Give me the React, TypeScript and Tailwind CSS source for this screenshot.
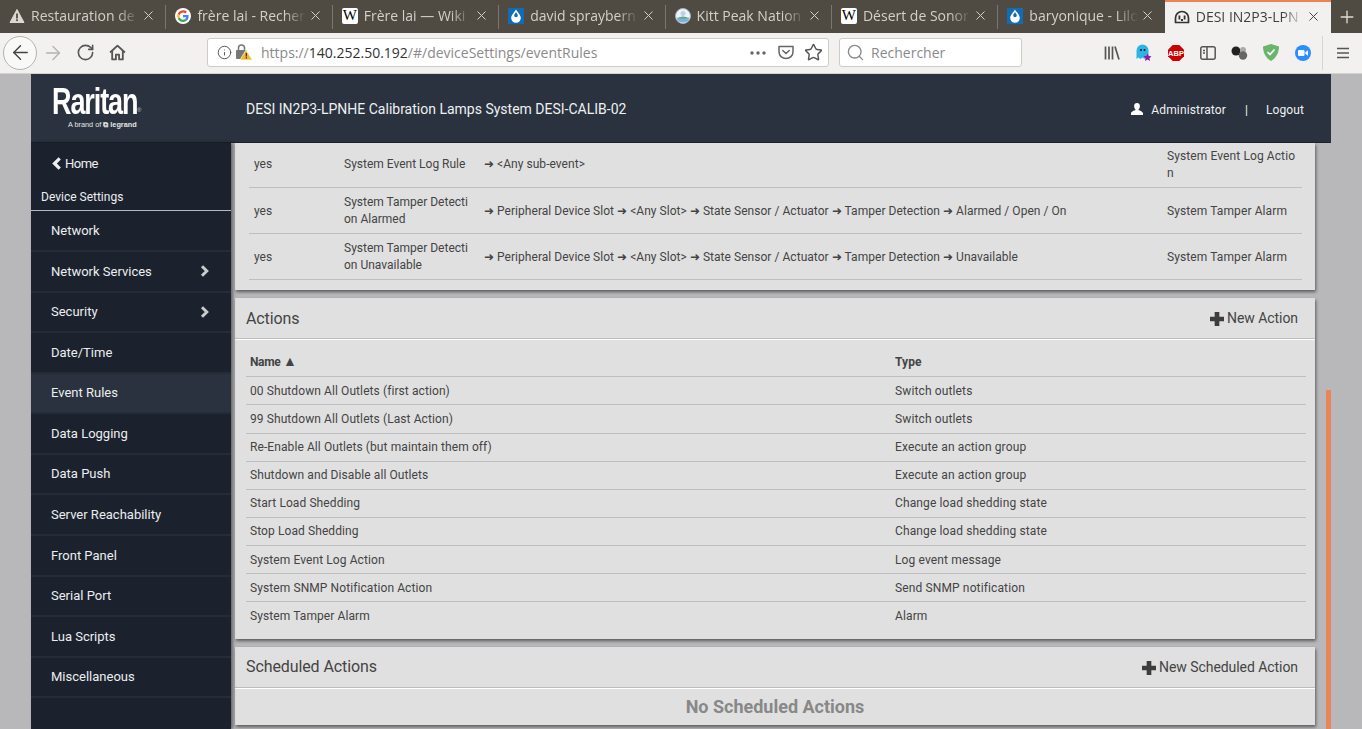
import React from "react";
import { ArrowLeft, ArrowRight, RotateCw, Info, X, Plus, Search, Star } from "lucide-react";

const Wiki = () => (
  <span className="w-4 h-4 bg-white rounded-[2px] flex items-center justify-center text-black text-[15px] leading-none font-['Liberation_Serif',serif]">W</span>
);
const Drop = () => (
  <svg width="16" height="16" viewBox="0 0 16 16"><rect width="16" height="16" fill="#0f6cb5" /><path d="M8 1.500 C9 3.500 12.800 7 12.800 10 A4.800 4.800 0 0 1 3.200 10 C3.200 7 7 3.500 8 1.500Z" fill="#fff" /><path d="M8 4.200 C8.800 5.400 9.800 6.400 9.800 7.500 A1.800 1.800 0 0 1 6.200 7.500 C6.200 6.400 7.200 5.400 8 4.200Z" fill="#0f6cb5" /></svg>
);
const tabs: { t: string; i: React.ReactNode; sep: boolean; active?: boolean }[] = [
  { t: "Restauration de", sep: true, i: <svg width="16" height="16" viewBox="0 0 16 16"><path d="M8 1.500 15 14.500H1Z" fill="#dcd9d2" stroke="#dcd9d2" strokeLinejoin="round" /><rect x="7.100" y="5.500" width="1.800" height="5" fill="#4f4b43" /><rect x="7.100" y="11.300" width="1.800" height="1.800" fill="#4f4b43" /></svg> },
  { t: "frère lai - Recher", sep: true, i: <svg width="16" height="16" viewBox="0 0 16 16"><circle cx="8" cy="8" r="8" fill="#fff" /><path d="M13.600 8.200c0-.5 0-.9-.1-1.300H8v2.400h3.200c-.1.8-.6 1.400-1.200 1.800l1.900 1.500c1.100-1 1.700-2.500 1.700-4.400Z" fill="#4285f4" /><path d="M8 14c1.600 0 2.900-.5 3.900-1.400L10 11.100c-.5.400-1.200.6-2 .6-1.500 0-2.800-1-3.300-2.400l-1.900 1.500C3.700 12.700 5.700 14 8 14Z" fill="#34a853" /><path d="M4.700 9.300a3.700 3.700 0 0 1 0-2.400L2.800 5.400a6 6 0 0 0 0 5.400Z" fill="#fbbc05" /><path d="M8 4.500c.9 0 1.600.3 2.200.9l1.700-1.700A6 6 0 0 0 2.800 5.400l1.900 1.500C5.200 5.500 6.500 4.500 8 4.500Z" fill="#ea4335" /></svg> },
  { t: "Frère lai — Wiki", sep: true, i: <Wiki /> },
  { t: "david spraybern", sep: true, i: <Drop /> },
  { t: "Kitt Peak Nation", sep: true, i: <svg width="16" height="16" viewBox="0 0 16 16"><circle cx="8" cy="8" r="7.500" fill="#eef3f6" stroke="#9fb4c6" /><path d="M1.500 10 Q8 7 14.500 10 L13 13 Q8 16 3 13Z" fill="#7fb2d8" /><path d="M4 9.500 Q8 8 12 9.500 L12 10.500 L4 10.500Z" fill="#5fa86a" /><circle cx="8" cy="5.500" r="2.500" fill="#b9d2e6" /></svg> },
  { t: "Désert de Sonor", sep: true, i: <Wiki /> },
  { t: "baryonique - Lilo", sep: false, i: <Drop /> },
  { t: "DESI IN2P3-LPN", sep: false, active: true, i: <svg width="16" height="16" viewBox="0 0 16 16"><path d="M3 13.500 H1.500 V9 A6.500 6.500 0 0 1 14.500 9 V13.500 H3Z" fill="none" stroke="#333" strokeWidth="1.700" strokeLinejoin="round" /><rect x="4.500" y="6.500" width="1.800" height="4" fill="#333" /><rect x="9.700" y="6.500" width="1.800" height="4" fill="#333" /><rect x="7" y="10" width="2" height="2" fill="#333" /></svg> },
];

const rules = [
  { a: "yes", b: "System Event Log Rule", c: "➜ <Any sub-event>", d: "System Event Log Action", h: "h-[45px]", s: "pb-[2px]", e: "" },
  { a: "yes", b: "System Tamper Detection Alarmed", c: "➜ Peripheral Device Slot ➜ <Any Slot> ➜ State Sensor / Actuator ➜ Tamper Detection ➜ Alarmed / Open / On", d: "System Tamper Alarm", h: "h-[46px]", s: "pt-[2px]", e: "pt-[2px]" },
  { a: "yes", b: "System Tamper Detection Unavailable", c: "➜ Peripheral Device Slot ➜ <Any Slot> ➜ State Sensor / Actuator ➜ Tamper Detection ➜ Unavailable", d: "System Tamper Alarm", h: "h-[46px]", s: "pt-[2px]", e: "pt-[2px]" },
];
const actions = [
  ["00 Shutdown All Outlets (first action)", "Switch outlets"],
  ["99 Shutdown All Outlets (Last Action)", "Switch outlets"],
  ["Re-Enable All Outlets (but maintain them off)", "Execute an action group"],
  ["Shutdown and Disable all Outlets", "Execute an action group"],
  ["Start Load Shedding", "Change load shedding state"],
  ["Stop Load Shedding", "Change load shedding state"],
  ["System Event Log Action", "Log event message"],
  ["System SNMP Notification Action", "Send SNMP notification"],
  ["System Tamper Alarm", "Alarm"],
];
const nav = ["Network", "Network Services", "Security", "Date/Time", "Event Rules", "Data Logging", "Data Push", "Server Reachability", "Front Panel", "Serial Port", "Lua Scripts", "Miscellaneous"];

const Cross = () => (
  <svg width="14" height="14" viewBox="1 1 12 12" fill="#3d3d3d"><path d="M5 1h4v4h4v4H9v4H5V9H1V5h4Z" /></svg>
);

function PanelHead({ title, action, tc = "" }: { title: string; action: string; tc?: string }) {
  return (
    <div className="h-[42px] flex items-center justify-between pl-[11px] pr-[17px] border-b border-b-white shadow-[inset_0_-1px_0_#bcbcbc]">
      <span className={`text-[16px] text-[#444] tracking-[-0.1px] ${tc}`}>{title}</span>
      <span className="flex items-center gap-[3px] text-[14px] text-[#444] tracking-[-0.06px]"><Cross />{action}</span>
    </div>
  );
}

export default function App() {
  return (
    <div className="w-[1362px] h-[729px] overflow-hidden flex flex-col font-['Roboto',sans-serif]">
      <div className="h-[33px] shrink-0 bg-[#4f4b43] flex font-['Open_Sans',sans-serif] text-[14px]">
        {tabs.map((t, i) => (
          <div key={i} className={`w-[166.4px] h-[33px] shrink-0 flex items-center pl-[9px] pr-[10px] pb-[2px] ${t.active ? "bg-[#f2f1ef] text-[#3f3f3f] border-t-2 border-t-[#ea8157]" : "text-[#d3d0c9]"} ${t.sep ? "relative after:absolute after:right-0 after:top-[5px] after:h-[24px] after:w-px after:bg-[#7b776e]" : ""}`}>
            <span className="w-4 h-4 shrink-0 flex">{t.i}</span>
            <span className="ml-[6px] flex-1 whitespace-nowrap overflow-hidden [mask-image:linear-gradient(to_right,black_80%,transparent_100%)]">{t.t}</span>
            <X size={15} strokeWidth={1.6} className={`shrink-0 ml-[2px] ${t.active ? "text-[#444]" : "text-[#d3d0c9]"}`} />
          </div>
        ))}
        <div className="flex-1 flex items-center justify-center"><Plus size={20} strokeWidth={1.6} className="text-[#e0ddd6]" /></div>
      </div>

      <div className="h-[40px] shrink-0 bg-[#f2f1ef] flex items-center pb-[1px] font-['Open_Sans',sans-serif] text-[14px] text-[#5a5a5a]">
        <div className="ml-[3px] w-[34px] h-[34px] shrink-0 rounded-full border border-[#b5b3b0] bg-[#f9f9f8] flex items-center justify-center"><ArrowLeft size={23} strokeWidth={1.5} className="text-[#444]" /></div>
        <ArrowRight size={22} strokeWidth={1.5} className="ml-[5px] text-[#b4b3b1]" />
        <RotateCw size={19} strokeWidth={2} className="ml-[12px] text-[#555]" />
        <svg width="17" height="17" viewBox="0 0 16 16" className="ml-[14px]" fill="none" stroke="#555" strokeWidth="1.700" strokeLinejoin="round"><path d="M1 8 8 1.500 15 8" /><path d="M3 6.500V14.500H6.500V10H9.500V14.500H13V6.500" /></svg>
        <div className="ml-[81px] w-[622px] h-[29px] bg-white border border-[#cfccc8] rounded-[3px] flex items-center pl-[9px] pr-[5px]">
          <Info size={15} strokeWidth={1.6} className="text-[#5a5a5a]" />
          <svg width="18" height="17" viewBox="0 0 18 17" className="ml-[3px]"><rect x="1" y="6" width="11" height="9" rx="1" fill="#777" /><path d="M3.500 6V4a3 3 0 0 1 6 0v2" fill="none" stroke="#777" strokeWidth="1.500" /><path d="M11 6 17.500 16H5Z" fill="#f5b820" stroke="#fff" strokeWidth=".7" /><rect x="10.700" y="9" width="1.300" height="3.500" fill="#333" /><rect x="10.700" y="13.200" width="1.300" height="1.300" fill="#333" /></svg>
          <span className="ml-[8px] text-[#8a8a8a]">https://<span className="text-[#333]">140.252.50.192</span>/#/deviceSettings/eventRules</span>
          <span className="flex-1" />
          <svg width="16" height="4" viewBox="0 0 16 4" fill="#666"><circle cx="2" cy="2" r="1.700" /><circle cx="8" cy="2" r="1.700" /><circle cx="14" cy="2" r="1.700" /></svg>
          <svg width="16" height="15" viewBox="0 0 16 15" className="ml-[12px]" fill="none" stroke="#666" strokeWidth="1.500"><path d="M1 1.500H15V7A7 6.500 0 0 1 1 7Z" strokeLinejoin="round" /><path d="M4.800 5.500 8 8.500 11.200 5.500" strokeLinecap="round" /></svg>
          <Star size={19} strokeWidth={1.8} className="ml-[10px] text-[#555]" />
        </div>
        <div className="ml-[10px] w-[183px] h-[29px] bg-white border border-[#cfccc8] rounded-[3px] flex items-center pl-[6px] text-[#8a8a8a]">
          <Search size={19} strokeWidth={1.7} className="text-[#888]" />
          <span className="ml-[6px]">Rechercher</span>
        </div>
        <div className="ml-[82px] flex items-center">
          <svg width="16" height="16" viewBox="0 0 16 16" stroke="#555" strokeWidth="1.700"><path d="M1.500 1.500V14.500M5 1.500V14.500M8.500 1.500V14.500M11 1.500 15 14.500" /></svg>
          <svg width="16" height="18" viewBox="0 0 16 18" className="ml-[16px]"><path d="M.5 15V6.500a6 6 0 0 1 12 0V15l-2-1.500-2 1.500-2-1.500-2 1.500-2-1.500Z" fill="#2fb3e6" /><circle cx="5" cy="6" r="1" fill="#111" /><circle cx="8.500" cy="6" r="1" fill="#111" /><path d="M11.500 9.500l1.200 2.500 2.800.3-2 1.900.5 2.800-2.500-1.400-2.500 1.400.5-2.800-2-1.900 2.800-.3Z" fill="#8e1aa5" /></svg>
          <svg width="16" height="16" viewBox="0 0 16 16" className="ml-[16px]"><path d="M4.700 0H11.300L16 4.700V11.300L11.300 16H4.700L0 11.300V4.700Z" fill="#c00" /><text x="8" y="10.800" textAnchor="middle" fontSize="7.500" fontWeight="700" fill="#fff" fontFamily="Liberation Sans, sans-serif">ABP</text></svg>
          <svg width="16" height="14" viewBox="0 0 16 14" className="ml-[16px]" fill="none" stroke="#555" strokeWidth="1.500"><rect x=".8" y=".8" width="14.400" height="12.400" rx="2" /><path d="M7 1V13M3 4.500H5M3 7H5" /></svg>
          <svg width="17" height="15" viewBox="0 0 17 15" className="ml-[15px]"><circle cx="5" cy="6" r="4.500" fill="#222" /><circle cx="12" cy="5" r="3" fill="#aaa" /><circle cx="12" cy="10.500" r="4.200" fill="#666" /></svg>
          <svg width="16" height="17" viewBox="0 0 16 17" className="ml-[15px]"><path d="M8 0 16 2.500C16 9 13 14 8 17 3 14 0 9 0 2.500Z" fill="#68b56b" /><path d="M4.500 8 7 10.500 11.500 5.500" fill="none" stroke="#fff" strokeWidth="1.600" /></svg>
          <svg width="16" height="16" viewBox="0 0 16 16" className="ml-[16px]"><circle cx="8" cy="8" r="8" fill="#2d8cff" /><rect x="3" y="5" width="6.500" height="6" rx="1.200" fill="#fff" /><path d="M10.300 7.200 13 5.300V10.700L10.300 8.800Z" fill="#fff" /></svg>
          <div className="ml-[11px] w-px h-[34px] bg-[#d8d6d3]" />
          <svg width="14" height="12" viewBox="0 0 14 12" className="ml-[13px]" stroke="#555" strokeWidth="1.700"><path d="M1 1.500H13M1 6H13M1 10.500H13" /></svg>
        </div>
      </div>
      <div className="h-px shrink-0 bg-[#d4d2cf]" />

      <div className="flex-1 min-h-0 bg-[#b8b8ba] pl-[31px] pr-[31px]">
        <div className="w-[1300px] h-full flex flex-col">
          <div className="h-[69px] shrink-0 bg-[#29323e] flex items-center text-white border-b border-b-[#1b222d]">
            <div className="w-[215px] pl-[21px] flex flex-col items-start">
              <span className="relative h-[30px] w-[90px]">
                <span className="absolute left-0 top-[-3px] origin-left scale-x-[0.73] text-[37px] leading-[37px] font-['Liberation_Sans',sans-serif] font-bold tracking-[-1.5px] whitespace-nowrap">Raritan</span>
                <span className="absolute left-[85px] top-[21px] text-[6px] leading-[6px] text-[#c3c8ce] font-['Liberation_Sans',sans-serif]">®</span>
              </span>
              <span className="ml-[16px] mt-[4px] text-[7.3px] leading-[10px] font-['Liberation_Sans',sans-serif] text-[#e6e6e6] whitespace-nowrap">A brand of <span className="font-bold">⧉ legrand</span></span>
            </div>
            <span className="text-[14px] text-[#eef0f2] pt-[2px]">DESI IN2P3-LPNHE Calibration Lamps System DESI-CALIB-02</span>
            <span className="flex-1" />
            <svg width="12" height="12" viewBox="0 0 12 12" fill="#fff" className="mt-[2px]"><path d="M6 0c1.800 0 2.900 1.300 2.900 3.100S7.900 6.500 7.300 7c1.500.6 4.700 1.500 4.700 3.500V12H0v-1.500C0 8.500 3.200 7.600 4.700 7 4.100 6.500 3.100 4.900 3.100 3.100S4.200 0 6 0Z" /></svg>
            <span className="ml-[8px] pt-[4px] text-[12px] text-[#eef0f2] tracking-[0.15px]">Administrator</span>
            <span className="ml-[19px] pt-[4px] text-[12px] text-[#eef0f2]">|</span>
            <span className="ml-[18px] mr-[27px] pt-[4px] text-[12px] text-[#eef0f2] tracking-[0.1px]">Logout</span>
          </div>

          <div className="flex-1 min-h-0 flex">
            <div className="w-[200px] shrink-0 bg-[#1b222d] text-[#eceef0] overflow-hidden shadow-[2px_0_3px_rgba(0,0,0,0.45)] z-10">
              <div className="h-[40.65px] pl-[21px] flex items-center text-[13px] tracking-[-0.5px]">
                <svg width="10" height="13" viewBox="0 0 9 12" fill="none" stroke="currentColor" strokeWidth="3" className="mr-[3px]"><path d="M7 1.200 2.200 6 7 10.800" /></svg>
                Home
              </div>
              <div className="h-[27.4px] mb-[0.6px] pl-[10px] flex items-center text-[12px] border-b border-b-[#b5b8bc]">Device Settings</div>
              {nav.map((n) => (
                <div key={n} className={`h-[40.55px] pl-[20px] pr-[22px] flex items-center justify-between text-[13px] border-b-2 border-b-[#242c38] ${n === "Event Rules" ? "bg-[#29323e]" : ""}`}>
                  <span>{n}</span>
                  {(n === "Network Services" || n === "Security") && (
                    <svg width="9" height="12" viewBox="0 0 9 12" fill="none" stroke="#c9cbce" strokeWidth="3"><path d="M2 1.200 6.800 6 2 10.800" /></svg>
                  )}
                </div>
              ))}
            </div>

            <div className="flex-1 min-w-0 relative pl-[4px] text-[12px] text-[#444] overflow-hidden">
              <div className="w-[1080px] flex flex-col gap-[8px]">
                <div className="bg-[#e0e0e0] shadow-[1px_2px_3px_rgba(0,0,0,0.5)] pl-[14px] pr-[13px] pb-[10px]">
                  {rules.map((r) => (
                    <div key={r.b} className={`${r.h} flex items-center border-b border-b-[#bfbfbf] leading-[17px]`}>
                      <span className={`w-[95px] pl-[5px] shrink-0 ${r.s}`}>{r.a}</span>
                      <span className={`w-[130px] mr-[10px] shrink-0 break-all ${r.e ? "" : r.s}`}>{r.b}</span>
                      <span className={`w-[683px] shrink-0 tracking-[0.04px] ${r.s}`}>{r.c}</span>
                      <span className={`w-[129px] shrink-0 break-all tracking-[0.1px] ${r.e}`}>{r.d}</span>
                    </div>
                  ))}
                </div>

                <div className="bg-[#e0e0e0] shadow-[1px_2px_3px_rgba(0,0,0,0.5)] pb-[10px]">
                  <PanelHead title="Actions" action="New Action" />
                  <div className="ml-[11px] mr-[9px] pt-[7px] tracking-[0.09px]">
                    <div className="h-[29.3px] flex items-center font-bold">
                      <span className="w-[649px] pl-[4px] shrink-0 tracking-[-0.35px]">Name <span className="text-[14px] leading-none">▲</span></span><span>Type</span>
                    </div>
                    {actions.map(([n, t]) => (
                      <div key={n} className="h-[28.14px] flex items-center border-t border-t-[#bfbfbf]">
                        <span className="w-[649px] pl-[4px] shrink-0">{n}</span><span className="tracking-[0.13px]">{t}</span>
                      </div>
                    ))}
                  </div>
                </div>

                <div className="bg-[#e0e0e0] shadow-[1px_2px_3px_rgba(0,0,0,0.5)]">
                  <PanelHead title="Scheduled Actions" action="New Scheduled Action" tc="pb-[2px]" />
                  <div className="h-[36px] pb-[2px] flex items-center justify-center text-[18px] font-bold text-[#888]">No Scheduled Actions</div>
                </div>
              </div>
              <div className="absolute right-0 top-[247px] bottom-0 w-[5px] bg-[#e8855a]" />
            </div>
          </div>
        </div>
      </div>
    </div>
  );
}
